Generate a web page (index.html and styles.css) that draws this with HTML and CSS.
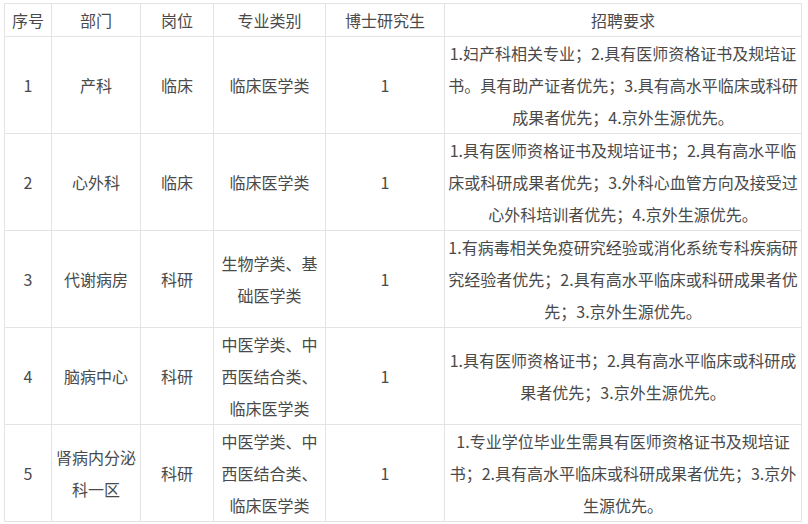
FILE: index.html
```html
<!DOCTYPE html>
<html lang="zh-CN">
<head>
<meta charset="utf-8">
<title>招聘要求</title>
<link rel="stylesheet" href="styles.css">
</head>
<body>
<div class="wrap">
<table class="jobs">
  <colgroup>
    <col class="c1"><col class="c2"><col class="c3"><col class="c4"><col class="c5"><col class="c6">
  </colgroup>
  <thead>
    <tr><th>序号</th><th>部门</th><th>岗位</th><th>专业类别</th><th>博士研究生</th><th>招聘要求</th></tr>
  </thead>
  <tbody>
    <tr>
      <td>1</td><td>产科</td><td>临床</td><td>临床医学类</td><td>1</td>
      <td>1.妇产科相关专业；2.具有医师资格证书及规培证书。具有助产证者优先；3.具有高水平临床或科研成果者优先；4.京外生源优先。</td>
    </tr>
    <tr>
      <td>2</td><td>心外科</td><td>临床</td><td>临床医学类</td><td>1</td>
      <td>1.具有医师资格证书及规培证书；2.具有高水平临床或科研成果者优先；3.外科心血管方向及接受过心外科培训者优先；4.京外生源优先。</td>
    </tr>
    <tr>
      <td>3</td><td>代谢病房</td><td>科研</td><td>生物学类、基础医学类</td><td>1</td>
      <td>1.有病毒相关免疫研究经验或消化系统专科疾病研究经验者优先；2.具有高水平临床或科研成果者优先；3.京外生源优先。</td>
    </tr>
    <tr>
      <td>4</td><td>脑病中心</td><td>科研</td><td>中医学类、中西医结合类、临床医学类</td><td>1</td>
      <td>1.具有医师资格证书；2.具有高水平临床或科研成果者优先；3.京外生源优先。</td>
    </tr>
    <tr>
      <td>5</td><td>肾病内分泌科一区</td><td>科研</td><td>中医学类、中西医结合类、临床医学类</td><td>1</td>
      <td>1.专业学位毕业生需具有医师资格证书及规培证书；2.具有高水平临床或科研成果者优先；3.京外生源优先。</td>
    </tr>
  </tbody>
</table>
</div>
</body>
</html>
```

FILE: styles.css
```css
html, body {
  margin: 0;
  padding: 0;
  background: #ffffff;
}
.wrap {
  padding: 3px 0 0 4px;
}
.jobs {
  border-collapse: collapse;
  table-layout: fixed;
  width: 797px;
  font-family: "Microsoft YaHei", "Noto Sans CJK SC", "Noto Sans", sans-serif;
  font-size: 16px;
  line-height: 32px;
  color: #4a4a4a;
}
.c1 { width: 47px; }
.c2 { width: 89px; }
.c3 { width: 73px; }
.c4 { width: 112px; }
.c5 { width: 119px; }
.c6 { width: 357px; }
.jobs th,
.jobs td {
  border: 1px solid #e3e3e3;
  padding: 0 2px;
  text-align: center;
  vertical-align: middle;
  font-weight: normal;
  word-break: break-all;
}
.jobs tbody td {
  height: 96px;
  box-sizing: border-box;
}
```
